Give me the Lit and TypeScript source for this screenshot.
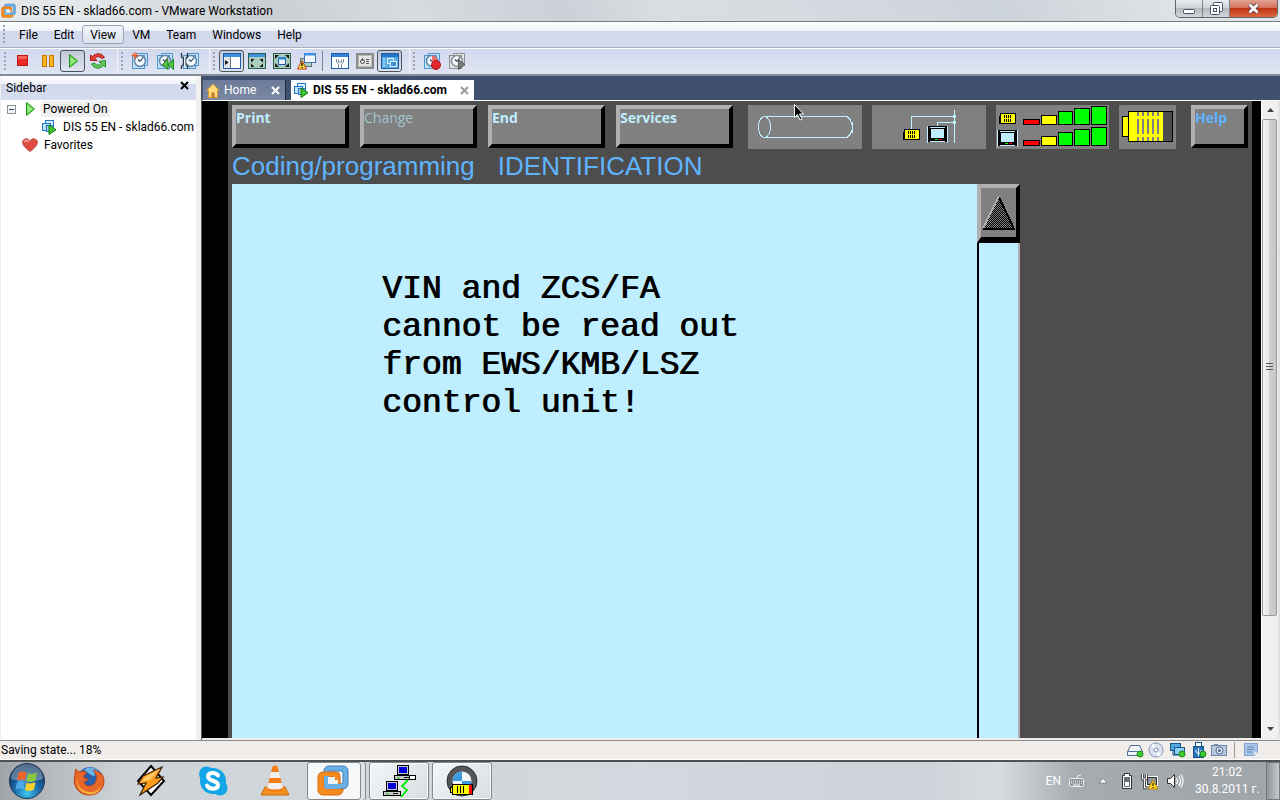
import { LitElement, html, css, svg } from "lit";
import { customElement } from "lit/decorators.js";
import { classMap } from "lit/directives/class-map.js";

/* ---------- shared glyph builders ---------- */

const icon = (w: number, h: number, body: unknown, crisp = false) =>
  html`<svg class="ic" width=${w} height=${h} viewBox="0 0 ${w} ${h}" fill="none"
    shape-rendering=${crisp ? "crispEdges" : "auto"} aria-hidden="true">${body}</svg>`;

const playArrow = svg`<path d="M4.500 1.500v13l8-6.500z" fill="#5fd04a" stroke="#1f9a1c"/><path d="M5.500 4v8l5-4z" fill="#9cec86"/>`;

const vmStack = svg`
  <rect x="4.500" y="1.500" width="8" height="8" fill="#d9effc" stroke="#2277c0"/>
  <rect x="1.500" y="4.500" width="8" height="7" fill="#bfe3fa" stroke="#2277c0"/>
  <rect x="5.500" y="6.500" width="7" height="6" fill="#a9d4f4" stroke="#2277c0"/>
  <path d="M8 6v9.500l7-4.750z" fill="#3cc32e" stroke="#0e7a10"/>`;

const clockCard = (stroke: string, fill: string, rim: string) => svg`
  <path d="M5.500 1.500h11v12h-11z" stroke=${stroke} fill=${fill}/>
  <rect x="1.500" y="3.500" width="12" height="13" fill=${fill} stroke=${stroke}/>
  <circle cx="9" cy="9" r="5.500" fill="#f4fafe" stroke=${rim} stroke-width="1.500"/>
  <path d="M9 9.500l3-4M9 9.500L7 7.500" stroke="#33475c" stroke-width="1.200"/>`;
const blueClock = clockCard("#4f94cc", "#c4e2f8", "#5f86a8");

const vmware = svg`
  <path d="M12 2h14a5 5 0 0 1 5 5v13a5 5 0 0 1-5 5h-7v-5h5a2 2 0 0 0 2-2v-9a2 2 0 0 0-2-2H13a2 2 0 0 0-2 2v3H7V7a5 5 0 0 1 5-5z" fill="#6bb0e4" stroke="#3f7eb8"/>
  <path d="M6 8h13a4 4 0 0 1 4 4v8h-5v-5a2 2 0 0 0-2-2H9a2 2 0 0 0-2 2v8a2 2 0 0 0 2 2h17v1a5 5 0 0 1-5 5H6a5 5 0 0 1-5-5V13a5 5 0 0 1 5-5z" fill="#f58a1f" stroke="#d56a10"/>
  <path d="M7 12h5v8h13v2a3 3 0 0 1-3 3H10a3 3 0 0 1-3-3z" fill="#6bb0e4"/>
  <path d="M11 13h7v3h3v4h-10z" fill="#eef3f8"/>`;

const ICONS = {
  stop: icon(18, 18, svg`<rect x="3.500" y="3.500" width="10" height="10" fill="#ea2a22" stroke="#c01410"/><path d="M4 4h9v3H4z" fill="#f2655c"/>`),
  pause: icon(18, 18, svg`<rect x="3.500" y="3.500" width="4" height="11" fill="#ffb41e" stroke="#c67a00"/><rect x="10.500" y="3.500" width="4" height="11" fill="#ffb41e" stroke="#c67a00"/>`),
  play: icon(16, 16, playArrow),
  reset: icon(18, 18, svg`
    <path d="M1.500 8.500V3l2 1.500C7 .5 13 1 15.500 5.500l-3 1C10 4 7.500 4 6 6.500l2 2z" fill="#e5403a" stroke="#a81a18"/>
    <path d="M16.500 8.500V15l-2-1.500C11 17.500 5 17 2.500 12l3-1C8 14 10.500 13.500 12 11.500l-2-2z" fill="#63c95c" stroke="#258a28"/>`),
  snapNew: icon(18, 18, svg`${blueClock}<path d="M4 0v7M.5 3.500h7M1.500 1l5 5M6.500 1l-5 5" stroke="#f0561c"/>`),
  snapBack: icon(18, 18, svg`${blueClock}<path d="M12 7.500v10L6.500 12.500zM17.500 7.500v10L12 12.500z" fill="#55c545" stroke="#1a8a1a"/>`),
  snapMgr: icon(20, 18, svg`<g transform="translate(2 0)">${blueClock}</g><path d="M1.500 1v4l2 1.500v6l-2 1.500v3M7.500 1v4l-2 1.500v6l2 1.500v3" stroke="#2c3540" stroke-width="1.300"/><path d="M4 6h1.500v8H4z" fill="#e8edf2"/>`),
  sidebar: icon(18, 16, svg`<rect x=".5" y=".5" width="17" height="15" fill="#fff" stroke="#1e5da8"/><path d="M1 1h16v3H1z" fill="#3f8fe0"/><path d="M1 4h6v11H1z" fill="#e1e4e8"/><path d="M7.500 4v11" stroke="#777"/><path d="M2 7l3.500 2.500L2 12z" fill="#111"/>`),
  fullscreen: icon(18, 16, svg`<rect x=".5" y=".5" width="17" height="15" fill="#a9cdbb" stroke="#2b5c50"/><path d="M1 1h16v3H1z" fill="#3f8fe0"/><path d="M3 6h3.500L3 9.500zM15 6h-3.500L15 9.500zM3 14h3.500L3 10.500zM15 14h-3.500l3.500-3.500z" fill="#111"/>`),
  unity: icon(18, 16, svg`<rect x=".5" y=".5" width="17" height="15" fill="#a9cdbb" stroke="#2b5c50"/><path d="M2 2h4L2 6zM16 2h-4l4 4zM2 14h4l-4-4zM16 14h-4l4-4z" fill="#111"/><rect x="5.500" y="4.500" width="7" height="7" fill="#eaf3fd" stroke="#1e5da8"/><path d="M5 4h8v2.500H5z" fill="#2f7fd6"/>`),
  multi: icon(20, 18, svg`<rect x="3.500" y="6.500" width="11" height="8" fill="#a9cdbb" stroke="#577"/><rect x="7.500" y="1.500" width="11" height="9" fill="#f2f8ff" stroke="#3c6fb0"/><path d="M7 1h12v2.500H7z" fill="#3f8fe0"/><path d="M5 8.500l4.500 8.500h-9z" fill="#ffe23a" stroke="#c43c18"/><path d="M5 11v3M5 15v1" stroke="#000" stroke-width="1.300"/>`),
  settings: icon(18, 16, svg`<rect x=".5" y=".5" width="17" height="15" fill="#fff" stroke="#1e5da8"/><path d="M1 1h16v3H1z" fill="#2f7fd6"/><path d="M5.500 6v3l2 2v4M12.500 6v3l-2 2v4M7.500 6.500v2.500h3V6.500" stroke="#7b8794"/>`),
  console: icon(18, 16, svg`<rect x="1" y="1" width="16" height="14" fill="#b9b9b9" stroke="#8c8c8c" stroke-width="2"/><rect x="3" y="3" width="12" height="10" fill="#e6e6e6"/><circle cx="6.500" cy="8.500" r="2" stroke="#444"/><path d="M6.500 5v3M10 6.500h3M10 8.500h3M10 10.500h3" stroke="#555"/>`),
  quick: icon(18, 16, svg`<rect x=".5" y=".5" width="17" height="15" fill="#5fb0e8" stroke="#1c5e9e"/><path d="M1 1h16v3H1z" fill="#2376c8"/><path d="M2 6.500h2M2 9.500h2M2 12.500h2" stroke="#d5ecfb"/><rect x="6.500" y="5.500" width="6" height="5" stroke="#d5ecfb"/><rect x="9.500" y="8.500" width="6" height="5" fill="#3d93d8" stroke="#d5ecfb"/>`),
  record: icon(18, 18, svg`${blueClock}<path d="M9 3.500A5.500 5.500 0 0 1 14.500 9H9z" fill="#f06a6a"/><circle cx="13" cy="13" r="4.500" fill="#e02626" stroke="#b01818"/>`),
  replay: icon(18, 18, svg`${clockCard("#8b8f94", "#e3e5e8", "#8b8f94")}<path d="M10.500 7.500v10l6.500-5z" fill="#7b8078" stroke="#555"/>`),
  tree: icon(16, 16, vmStack),
  heart: icon(16, 14, svg`<path d="M8 13.500C3 10 .5 7 .5 4.300.5 1 5.500-.8 8 2.800 10.500-.8 15.500 1 15.500 4.300 15.500 7 13 10 8 13.500z" fill="#dc4a42" stroke="#b85a54"/><path d="M2.500 4.500C3 2 6 2 7 4" stroke="#f4a59f" stroke-width="1.500"/>`),
  home: icon(14, 15, svg`<path d="M7 .8L.7 7.500H2.500v7h9v-7h1.800z" fill="#ffd97a" stroke="#d6962a"/><path d="M5.500 9.500h3v5h-3z" fill="#b87a2a"/>`),
};

const cross = (color: string, s = 9, w = 2) =>
  icon(s, s, svg`<path d="M1 1l${s - 2} ${s - 2}M${s - 1} 1L1 ${s - 1}" stroke=${color} stroke-width=${w}/>`);

/* ---------- diagnostic panel pictograms ---------- */

const miniPlug = svg`
  <path d="M1 5h2v7H1z" fill="#ff0" stroke="#000"/>
  <rect x="2.500" y="2.500" width="15" height="10" fill="#ff0" stroke="#000"/>
  <path d="M6.500 4v8M8.500 4v8M10.500 4v8M12.500 4v8" stroke="#000" stroke-dasharray="3 1"/>`;
const miniTester = svg`
  <path d="M1 1h20v16H1z" fill="#000"/>
  <path d="M.5 1v17M20.500 1v17" stroke="#bfeeff"/>
  <path d="M3 2.500h15M3 16.500h15" stroke="#bfeeff"/>
  <rect x="4" y="4" width="13" height="9" fill="#bfeeff"/>
  <path d="M8 14.500h3" stroke="#0f0"/><path d="M12 14.500h3" stroke="#f00"/>`;

const bars = (y: number) => svg`
  <rect x="27.500" y=${y - 5.5} width="16" height="5" fill="#f00"/>
  <rect x="45.500" y=${y - 9.5} width="15" height="9" fill="#ff0"/>
  <rect x="62.500" y=${y - 13.5} width="14" height="13" fill="#0f0"/>
  <rect x="78.500" y=${y - 16.5} width="15" height="16" fill="#0f0"/>
  <rect x="95.500" y=${y - 18.5} width="15" height="18" fill="#0f0"/>`;

const pipe = icon(114, 44, svg`
  <g stroke="#bfeeff"><ellipse cx="16.500" cy="22" rx="6" ry="10.500"/>
  <path d="M16 11.500h83l3 3 2 5v6l-2 4-3 3H16M102.500 17.500h2v10h-2"/></g>`, true);
const network = icon(114, 44, svg`
  <path d="M39.500 24V11.500H82M65.500 22V17.500H82M82.500 5v33" stroke="#bfeeff"/>
  <path d="M81 10h3v3h-3zM81 16h3v3h-3z" fill="#bfeeff"/>
  <g transform="translate(30 22)">${miniPlug}</g><g transform="translate(55 20)">${miniTester}</g>`, true);
const signal = icon(113, 44, svg`
  <g transform="translate(2 6)">${miniPlug}</g><g transform="translate(1 24)">${miniTester}</g>
  <g stroke="#000">${bars(20)}${bars(41)}</g>`, true);
const battery = icon(57, 44, svg`
  <rect x="3.500" y="11.500" width="6" height="20" fill="#ff0" stroke="#000"/>
  <rect x="9.500" y="6.500" width="44" height="30" fill="#4d4d4d" stroke="#000"/>
  <path d="M10 7h34v29H10z" fill="#ff0"/>
  <path d="M19 7v29M24 7v29M29 7v29M34 7v29M39 7v29" stroke="#808080" stroke-width="2" stroke-dasharray="4 3 15 3 4 9"/>`, true);
const upArrow = icon(34, 36, svg`
  <defs><pattern id="dither" width="2" height="2" patternUnits="userSpaceOnUse"><path d="M0 0h1v1H0zM1 1h1v1H1z" fill="#000"/></pattern></defs>
  <path d="M17 2L2 34h31z" fill="#808080"/><path d="M17 2L2 34h31z" fill="url(#dither)"/>
  <path d="M17 2l15 32" stroke="#000" stroke-width="2"/><path d="M1 34h32" stroke="#000" stroke-width="2"/><path d="M17 1L1 33" stroke="#b0b0b0" stroke-width="2"/>`, true);
const pointer = html`<svg class="pointer" width="12" height="19" viewBox="0 0 12 19" aria-hidden="true">
  <path d="M.5.500v13l3-3 2.500 5.500 2-1-2.500-5h4z" fill="#000" stroke="#fff"/></svg>`;

/* ---------- status and taskbar pictograms ---------- */

const dot = svg`<circle cx="13" cy="12" r="3" fill="#3ec92e" stroke="#1a8a1a"/>`;
const STATUS = [
  ["Hard disk", icon(17, 16, svg`<path d="M3.500 3.500h9l3 6v4H.5v-4z" fill="#edf3f9" stroke="#4e6d92"/><path d="M.5 9.500h15" stroke="#4e6d92"/>${dot}`)],
  ["CD/DVD", icon(17, 16, svg`<circle cx="8" cy="8" r="7" fill="#dbe4f0" stroke="#7d92b0"/><path d="M8 8L3 3.500 6 1.500zM8 8l5 4.500-3 2z" fill="#fff"/><circle cx="8" cy="8" r="2" fill="#fff" stroke="#7d92b0"/>`)],
  ["Network adapter", icon(17, 16, svg`<rect x="1.500" y="1.500" width="10" height="7" fill="#4ea7dd" stroke="#17568c"/><rect x="5.500" y="5.500" width="10" height="7" fill="#8bd0f5" stroke="#17568c"/><path d="M4 9v4h7" stroke="#17568c"/>${dot}`)],
  ["USB", icon(17, 16, svg`<rect x="5.500" y=".5" width="6" height="4" fill="#fff" stroke="#17568c"/><rect x="3.500" y="4.500" width="10" height="11" fill="#2b74b8" stroke="#17568c"/><path d="M8.500 6v8M6 8v2l2.500 2L11 10V8" stroke="#fff"/>${dot}`)],
  ["Camera", icon(17, 16, svg`<rect x=".5" y="3.500" width="15" height="10" fill="#b8c8dc" stroke="#6c87a8"/><path d="M3 2h4v2H3z" fill="#6c87a8"/><circle cx="8.500" cy="8.500" r="3.500" fill="#e4ecf5" stroke="#47668e"/><circle cx="8.500" cy="8.500" r="1.500" fill="#47668e"/>`)],
] as const;
const note = icon(16, 16, svg`<path d="M1.500 1.500h13v9l-3 3h-10z" fill="#a9c6e6" stroke="#7fa3cf"/><path d="M4 5h7M4 7.500h7M4 10h5" stroke="#5f88bb"/><path d="M14.500 10.500h-3v3z" fill="#fff"/>`);

const LAUNCH = [
  ["Firefox", icon(34, 34, svg`<circle cx="18" cy="16" r="13" fill="#2a5fae"/><path d="M12 6c4-4 12-3 15 2-4-1-5 1-4 4-4 0-6-3-11-6z" fill="#69b4e8"/>
    <path d="M4 5c1 1.500 2 2.500 4 3 3-2 6 0 7 1-2 1-4 3-3 5l4 1c0 2-4 2-4 4 2 4 8 4 11 0 3-5 1-10-2-13 6 1 8 5 8 3 7 9 1 22-12 22C6 31 0 21 3 11c0-2 0-4 1-6z" fill="#e8682a" stroke="#b8441a"/>
    <path d="M5 14c0 9 6 14 13 14 5 0 9-2 11-6-2 8-9 9-13 8C8 29 4 22 5 14z" fill="#f9b43c"/>`)],
  ["Winamp", icon(34, 34, svg`<path d="M17 2l13 15-13 14L4 17z" fill="#fff" stroke="#000" stroke-width="2"/><path d="M28 3L9 12 4 20l8-1-6 12 18-12 5-6-7 1z" fill="#ff9c1c" stroke="#3a2208" stroke-width="1.200"/><path d="M26 5L11 13l-4 5 9-2z" fill="#ffc860"/>`)],
  ["Skype", icon(34, 34, svg`<circle cx="17" cy="17" r="13" fill="#12a5e8"/><circle cx="10.500" cy="10" r="7.500" fill="#12a5e8"/><circle cx="24" cy="24" r="7.500" fill="#12a5e8"/><path d="M22 11.500c-2-3.500-10-3.500-10 1 0 5 10 3.500 10 8.500 0 5-9 4.500-11 .5" stroke="#fff" stroke-width="4" stroke-linecap="round"/>`)],
  ["VLC", icon(34, 34, svg`<path d="M7 23h20l4 8H3z" fill="#f5901e" stroke="#c96a10"/><path d="M14.500 2.500q2.500-2 5 0L25.500 26q-8.500 4-17 0z" fill="#f47c14"/><path d="M13 8h8l1.500 6h-11zM10.300 19h13.400l1.300 5q-8 3-16 0z" fill="#f0f0ee"/>`)],
] as const;

const pc = svg`<rect x="3.500" y=".5" width="11" height="9" fill="#c8c8c8" stroke="#000"/><path d="M5 2h8v6H5z" fill="#0000d8"/><rect x=".5" y="10.500" width="17" height="4" fill="#c8c8c8" stroke="#000"/><path d="M3 13h3" stroke="#0c0"/><path d="M10 12.500h5" stroke="#000"/>`;
const TASKS = [
  ["VMware Workstation", icon(34, 34, vmware), true],
  ["Network connections", icon(34, 34, svg`<g transform="translate(12 1)">${pc}<rect x="15.500" y="10.500" width="6" height="4" fill="#fff" stroke="#000"/></g><path d="M26 16l-6 6 5 4-6 7" stroke="#0e0" stroke-width="1.800"/><g transform="translate(1 17)">${pc}</g>`), false],
  ["Diagnostics", icon(34, 34, svg`<circle cx="17" cy="17" r="15" fill="#54575a" stroke="#2c2e30"/><circle cx="17" cy="17" r="9.500" fill="#f5f7f8"/><path d="M17 17V7.500A9.500 9.500 0 0 0 7.500 17zM17 17v9.500a9.500 9.500 0 0 0 9.500-9.500z" fill="#3c9be0"/><rect x="7.500" y="20.500" width="20" height="10" fill="#ff0" stroke="#000"/><path d="M24 21h3v9h-3z" fill="#f00"/><rect x="5.500" y="23.500" width="2" height="5" fill="#ff0" stroke="#000"/><path d="M12.500 22v7M15.500 22v7M18.500 22v7" stroke="#000"/>`), false],
] as const;

const orb = icon(38, 38, svg`
  <defs><radialGradient id="orb" cx=".5" cy=".85" r=".8"><stop offset="0" stop-color="#3fc8f4"/><stop offset=".45" stop-color="#1c6aa8"/><stop offset="1" stop-color="#0e2f58"/></radialGradient></defs>
  <circle cx="19" cy="19" r="17.500" fill="url(#orb)" stroke="#1a3450"/><path d="M3 17a16 15 0 0 1 32 0q-16 5-32 0z" fill="#fff" opacity=".3"/>
  <path d="M10.500 10.500q4-2 8 0l-1.500 8q-4-2-8 0z" fill="#f0642c"/><path d="M20 11q4 2 9-.5l-1.500 8q-4 2.500-9 .5z" fill="#8cc83c"/>
  <path d="M9 20q4-2 8 0l-1.500 7.500q-4-2-8 0z" fill="#4aa8e8"/><path d="M18.500 20.500q4 2 9-.5L26 27.500q-4 2.500-9 .5z" fill="#fcd02c"/>`);
const keyboard = icon(18, 16, svg`<path d="M9 5q0-3 4-3" stroke="#eee"/><rect x="1.500" y="5.500" width="14" height="8" rx="1" fill="#8c9196" stroke="#f2f2f2"/><path d="M3 8h11M3 10h11" stroke="#fff" stroke-dasharray="1 1"/><path d="M5 12h7" stroke="#fff"/>`);
const chevron = icon(10, 6, svg`<path d="M5 .5l4 4.500H1z" fill="#fff" stroke="#555" stroke-width=".5"/>`);
const power = icon(14, 18, svg`<path d="M4.500 3.500v-2h5v2h2v13h-9v-13z" fill="#fff" stroke="#333"/><path d="M4 5h6v10H4z" fill="#6a6f74"/><path d="M5 10h4v4H5z" fill="#fff"/>`);
const lan = icon(18, 18, svg`<rect x="5.500" y="4.500" width="11" height="9" fill="#d8dde2" stroke="#fff"/><rect x="6.500" y="5.500" width="9" height="7" fill="#8c959e" stroke="#333"/><path d="M1.500 2v5h4V2M3.500 7v9h4" stroke="#333" stroke-width="2.500"/><path d="M1.500 2v5h4V2M3.500 7v9h4" stroke="#fff"/><path d="M12 8l5 9H7z" fill="#ffd21e" stroke="#b8860b"/><path d="M12 11v3M12 15v1" stroke="#000"/>`);
const speaker = icon(18, 18, svg`<path d="M1.500 6.500h3l4-4v13l-4-4h-3z" fill="#fff" stroke="#333"/><path d="M10.500 6q2 3 0 6M13 4q3 5 0 10M15 2.500q4 6.500 0 13" stroke="#fff" stroke-width="1.200"/>`);

const MENU = ["File", "Edit", "View", "VM", "Team", "Windows", "Help"];

type Tool = { label: string; glyph: unknown; pressed?: boolean; rule?: boolean };
const TOOLS: Tool[][] = [
  [
    { label: "Power off", glyph: ICONS.stop },
    { label: "Suspend", glyph: ICONS.pause },
    { label: "Power on", glyph: ICONS.play, pressed: true },
    { label: "Reset", glyph: ICONS.reset },
  ],
  [
    { label: "Take snapshot", glyph: ICONS.snapNew },
    { label: "Revert snapshot", glyph: ICONS.snapBack },
    { label: "Manage snapshots", glyph: ICONS.snapMgr },
  ],
  [
    { label: "Show sidebar", glyph: ICONS.sidebar, pressed: true },
    { label: "Full screen", glyph: ICONS.fullscreen },
    { label: "Unity", glyph: ICONS.unity },
    { label: "Cycle monitors", glyph: ICONS.multi },
    { label: "Settings", glyph: ICONS.settings, rule: true },
    { label: "Summary view", glyph: ICONS.console },
    { label: "Console view", glyph: ICONS.quick, pressed: true },
  ],
  [
    { label: "Record", glyph: ICONS.record },
    { label: "Replay", glyph: ICONS.replay },
  ],
];

@customElement("app-root")
export class AppRoot extends LitElement {
  static styles = css`
    :host {
      display: flex;
      flex-direction: column;
      height: 100vh;
      overflow: hidden;
      background: #f0edeb;
      color: #000;
      font: 12px/16px Roboto, "Open Sans", "Noto Sans", sans-serif;
    }
    * { box-sizing: border-box; }
    button { font: inherit; color: inherit; background: none; border: 0; padding: 0; margin: 0; display: flex; align-items: center; justify-content: center; }
    ul { list-style: none; margin: 0; padding: 0; }
    .ic { display: block; flex: none; }

    .title { display: flex; align-items: flex-start; height: 22px; flex: none; border-bottom: 1px solid #777b80;
      background: linear-gradient(65deg, #e3e7ea 0 8%, #c9ced3 20%, #d6dbe0 32%, #cbd1d7 44%, #d9dee2 52%, #d2d8de 68%, #cdd3da 78%, #dfe3e6 92%); }
    .name { display: flex; align-items: center; gap: 5px; height: 21px; padding-left: 1px; flex: 1; }
    .caption { display: flex; height: 18px; margin-right: 2px; border: 1px solid #5e6670; border-top: 0; border-radius: 0 0 5px 5px; overflow: hidden; }
    .cap { width: 27px; border-right: 1px solid #7c838a; background: linear-gradient(#e9ecee, #cdd1d5 50%, #b4b9be 50%, #d2d6da); }
    .close { width: 47px; border-right: 0; background: linear-gradient(#e5a193, #d4735f 45%, #bf3316 50%, #dd6a3d); }

    .menu { position: relative; display: flex; align-items: center; height: 26px; flex: none; padding-left: 11px; border-bottom: 1px solid #aab0bd;
      background: linear-gradient(#fff, #eff3fa 9px, #d3d9ed 9px, #d3d9ed); }
    .item { height: 19px; padding: 0 7px; border: 1px solid transparent; border-radius: 3px; }
    .hot { border-color: #9aa2b0; background: linear-gradient(#f2f4fa, #dde2f0); }

    .tools { display: flex; height: 28px; flex: none; padding-left: 1px; border-top: 1px solid #fff; border-bottom: 2px solid #858c96; background: linear-gradient(#d3d9ed, #dfe4f3); }
    .group { display: flex; align-items: center; padding: 0 7px 1px 9px; position: relative; border-right: 1px solid #f4f6fb; }
    .group:last-child { border-right: 0; }
    .grip { position: absolute; left: 3px; top: 3px; width: 2px; height: 19px; background: repeating-linear-gradient(#9aa2b4 0 2px, transparent 2px 4px); }
    .tool { width: 25px; height: 22px; border: 1px solid transparent; border-radius: 3px; }
    .pressed { border: 1px solid #4b535e; background: linear-gradient(#c2c9d6, #dfe4ee); }
    .rule { width: 1px; height: 20px; background: #7c8594; margin: 0 4px 0 3px; }

    .work { display: flex; flex: 1; min-height: 0; }
    .side { width: 201px; flex: none; background: #fff; border-right: 5px solid #f0f0f0; border-left: 1px solid #f0f0f0; }
    .sidehead { display: flex; justify-content: space-between; height: 24px; padding: 0 7px 0 5px; align-items: center; background: linear-gradient(#fff, #eef1f9 8px, #d3d9ed 8px, #d6dcee); }
    .sidehead button { margin-bottom: 6px; }
    .row { display: flex; align-items: center; height: 18px; gap: 6px; }
    .r1 { padding-left: 6px; }
    .r2 { padding-left: 40px; }
    .r3 { padding-left: 21px; }
    .lit { background: #f0f0f0; padding: 0 2px; margin-left: -3px; }
    .twig { width: 9px; height: 9px; border: 1px solid #919191; background: linear-gradient(#2a4a7a, #2a4a7a) center / 5px 1px no-repeat #f4f4f4; }

    .main { flex: 1; min-width: 0; display: flex; flex-direction: column; border-left: 1px solid #555; }
    .tabs { display: flex; align-items: flex-end; gap: 5px; height: 25px; flex: none; padding-left: 1px; background: #40516f; border-bottom: 1px solid #fff; color: #fff; }
    .tab { display: flex; align-items: center; height: 20px; padding: 0 5px 0 3px; background: linear-gradient(#6c7b99, #7b89a4); border-right: 1px solid #1f2a3c; width: 83px; gap: 4px; }
    .tab button:last-child { margin-left: auto; }
    .open { width: 183px; background: #fff; color: #000; font-weight: 700; border: 0; padding: 0 5px 0 2px; }

    .view { flex: 1; min-height: 0; display: flex; background: #000; padding-left: 26px; border-bottom: 2px solid #f0edeb; }
    .dis { flex: 1; min-width: 0; display: flex; flex-direction: column; background: #4d4d4d; padding: 4px 4px 0; border-right: 9px solid #000; box-sizing: content-box; }
    .keys { display: flex; align-items: flex-start; gap: 15px; }
    .set { display: flex; gap: 11px; }
    .lamps { display: flex; gap: 10px; }
    .key { width: 117px; height: 43px; border: 4px solid; border-color: #b0b0b0 #000 #000 #b0b0b0; background: #808080; color: #bfeeff; justify-content: flex-start; align-items: flex-start; font: 700 14px/18px "Open Sans", "Noto Sans", sans-serif; }
    .key:disabled { color: #a4c4ce; font-weight: 400; }
    .help { width: 58px; color: #5fb4ff; margin-left: auto; }
    .lamp { position: relative; background: #808080; height: 44px; }
    .pointer { position: absolute; left: 46px; top: -1px; }
    .heading { display: flex; gap: 23px; margin: 0; height: 35px; align-items: flex-start; color: #5fb4ff; font: 400 26px/34px "Liberation Sans", Arial, sans-serif; }
    .sheet { flex: 1; min-height: 0; display: flex; width: 78%; max-width: 788px; background: #bfeeff; }
    .message { flex: 1; margin: 0; padding: 87px 0 0 150px; color: #000; font: 400 33px/38px "Liberation Mono", "Courier New", monospace; text-shadow: 1px 0 0 #000; white-space: pre-line; }
    .rail { width: 43px; display: flex; flex-direction: column; }
    .up { width: 43px; height: 59px; border: 4px solid; border-color: #b0b0b0 #000 #000 #b0b0b0; border-bottom-width: 6px; background: #808080; }
    .track { flex: 1; border-left: 2px solid #000; border-right: 2px solid #b0b0b0; }

    .scroll { width: 19px; flex: none; display: flex; flex-direction: column; background: #f0f0f0; border-left: 1px solid #fff; border-right: 2px solid #e2e2e2; }
    .arrow { width: 16px; height: 18px; flex: none; }
    .thumb { flex: 0 1 78%; display: flex; align-items: center; justify-content: center; margin-right: 1px; border: 1px solid #979797; border-radius: 2px; background: linear-gradient(90deg, #f4f4f4, #e8e8e8 45%, #cfcfd2 50%, #c6c7ca); }
    .gap { flex: 1; }

    .status { display: flex; align-items: center; height: 20px; flex: none; padding: 0 21px 0 1px; border-top: 1px solid #8b8b8b; border-bottom: 1px solid #fff; justify-content: space-between; }
    .devices { display: flex; align-items: center; gap: 4px; }
    .divider { width: 1px; height: 16px; background: #9a9a9a; margin: 0 4px 0 2px; }

    .taskbar { display: flex; height: 40px; flex: none; align-items: center; border-top: 2px solid #4e5356; padding-left: 8px;
      background: linear-gradient(90deg, #a0a4a8, #b6babe 4%, #cfd4d9 10%, #d3d8de 50%, #cdd3d9 72%, #d8dce0 78%, #a6abb0 84%, #a0a5a9); }
    .launch { display: flex; gap: 28px; margin-left: 26px; }
    .tasks { display: flex; gap: 3px; margin-left: 15px; align-self: stretch; }
    .task { width: 60px; border: 1px solid #83888d; border-radius: 3px; background: linear-gradient(135deg, #f4f6f8, #d8dce2); box-shadow: inset 0 0 0 1px #f7f9fa; }
    .stack { width: 54px; margin-right: 5px; background: #f6f8fa; box-shadow: 4px 0 0 #dfe3e7, 5px 0 0 #83888d; }
    .tray { margin-left: auto; display: flex; align-items: center; gap: 7px; color: #fff; align-self: stretch; }
    .more { padding: 0 5px; }
    .clock { text-align: center; line-height: 17px; padding-left: 4px; width: 68px; white-space: nowrap; }
    .peek { align-self: stretch; width: 14px; border: 1px solid #74797d; background: linear-gradient(90deg, #8f9498, #c6cacd); }
  `;

  private tool(t: Tool) {
    return html`${t.rule ? html`<span class="rule"></span>` : null}
      <button class=${classMap({ tool: true, pressed: !!t.pressed })} aria-label=${t.label}>${t.glyph}</button>`;
  }

  render() {
    return html`
      <header class="title">
        <div class="name">${icon(15, 15, svg`<g transform="scale(.47)">${vmware}</g>`)}<span>DIS 55 EN - sklad66.com - VMware Workstation</span></div>
        <div class="caption">
          <button class="cap" aria-label="Minimize">${icon(12, 12, svg`<rect x=".5" y="6.500" width="11" height="4" rx="1" fill="#fff" stroke="#4a4f6a"/>`)}</button>
          <button class="cap" aria-label="Restore">${icon(13, 13, svg`<rect x="3.500" y=".5" width="9" height="9" rx="1" fill="#fff" stroke="#4a4f6a"/><rect x=".5" y="3.500" width="9" height="9" rx="1" fill="#fff" stroke="#4a4f6a"/><rect x="3.500" y="6.500" width="3" height="3" stroke="#4a4f6a"/>`)}</button>
          <button class="cap close" aria-label="Close">${icon(13, 11, svg`<path d="M2.500 1.500l8 8M10.500 1.500l-8 8" stroke="#5b3a40" stroke-width="4.500"/><path d="M2.500 1.500l8 8M10.500 1.500l-8 8" stroke="#fff" stroke-width="2.700"/>`)}</button>
        </div>
      </header>
      <nav class="menu"><span class="grip"></span>${MENU.map((m) => html`<button class=${classMap({ item: true, hot: m === "View" })}>${m}</button>`)}</nav>
      <div class="tools">${TOOLS.map((g) => html`<div class="group"><span class="grip"></span>${g.map((t) => this.tool(t))}</div>`)}</div>

      <div class="work">
        <aside class="side">
          <div class="sidehead"><span>Sidebar</span><button aria-label="Close sidebar">${cross("#000", 9, 2)}</button></div>
          <ul>
            <li class="row r1"><span class="twig"></span>${ICONS.play}<span class="lit">Powered On</span></li>
            <li class="row r2">${ICONS.tree}<span>DIS 55 EN - sklad66.com</span></li>
            <li class="row r3">${ICONS.heart}<span>Favorites</span></li>
          </ul>
        </aside>
        <main class="main">
          <div class="tabs">
            <div class="tab">${ICONS.home}<button>Home</button><button aria-label="Close Home">${cross("#fff", 9, 2)}</button></div>
            <div class="tab open">${ICONS.tree}<button>DIS 55 EN - sklad66.com</button><button aria-label="Close tab">${cross("#9b9b9b", 9, 2)}</button></div>
          </div>
          <div class="view">
            <section class="dis">
              <div class="keys">
                <div class="set">
                  <button class="key">Print</button>
                  <button class="key" disabled>Change</button>
                  <button class="key">End</button>
                  <button class="key">Services</button>
                </div>
                <div class="lamps">
                  <div class="lamp">${pipe}${pointer}</div>
                  <div class="lamp">${network}</div>
                  <div class="lamp">${signal}</div>
                  <div class="lamp">${battery}</div>
                </div>
                <button class="key help">Help</button>
              </div>
              <h1 class="heading"><span>Coding/programming</span><span>IDENTIFICATION</span></h1>
              <div class="sheet">
                <p class="message">VIN and ZCS/FA
                  cannot be read out
                  from EWS/KMB/LSZ
                  control unit!</p>
                <div class="rail"><button class="up" aria-label="Scroll up">${upArrow}</button><div class="track"></div></div>
              </div>
            </section>
            <div class="scroll">
              <button class="arrow" aria-label="Up">${icon(7, 4, svg`<path d="M3.500 0L7 4H0z" fill="#444"/>`)}</button>
              <div class="thumb">${icon(7, 8, svg`<path d="M0 .5h7M0 3.500h7M0 6.500h7" stroke="#555"/>`)}</div>
              <div class="gap"></div>
              <button class="arrow" aria-label="Down">${icon(7, 4, svg`<path d="M3.500 4L7 0H0z" fill="#444"/>`)}</button>
            </div>
          </div>
        </main>
      </div>

      <footer class="status">
        <span>Saving state... 18%</span>
        <div class="devices">${STATUS.map(([l, g]) => html`<button aria-label=${l}>${g}</button>`)}<span class="divider"></span><button aria-label="Messages">${note}</button></div>
      </footer>
      <div class="taskbar">
        <button aria-label="Start">${orb}</button>
        <div class="launch">${LAUNCH.map(([l, g]) => html`<button aria-label=${l}>${g}</button>`)}</div>
        <div class="tasks">${TASKS.map(([l, g, s]) => html`<button class=${classMap({ task: true, stack: s })} aria-label=${l}>${g}</button>`)}</div>
        <div class="tray">
          <span>EN</span>
          <button aria-label="Keyboard">${keyboard}</button>
          <button class="more" aria-label="Show hidden icons">${chevron}</button>
          <button aria-label="Battery">${power}</button>
          <button aria-label="Network">${lan}</button>
          <button aria-label="Volume">${speaker}</button>
          <div class="clock">21:02<br />30.8.2011 г.</div>
          <button class="peek" aria-label="Show desktop"></button>
        </div>
      </div>
    `;
  }
}
